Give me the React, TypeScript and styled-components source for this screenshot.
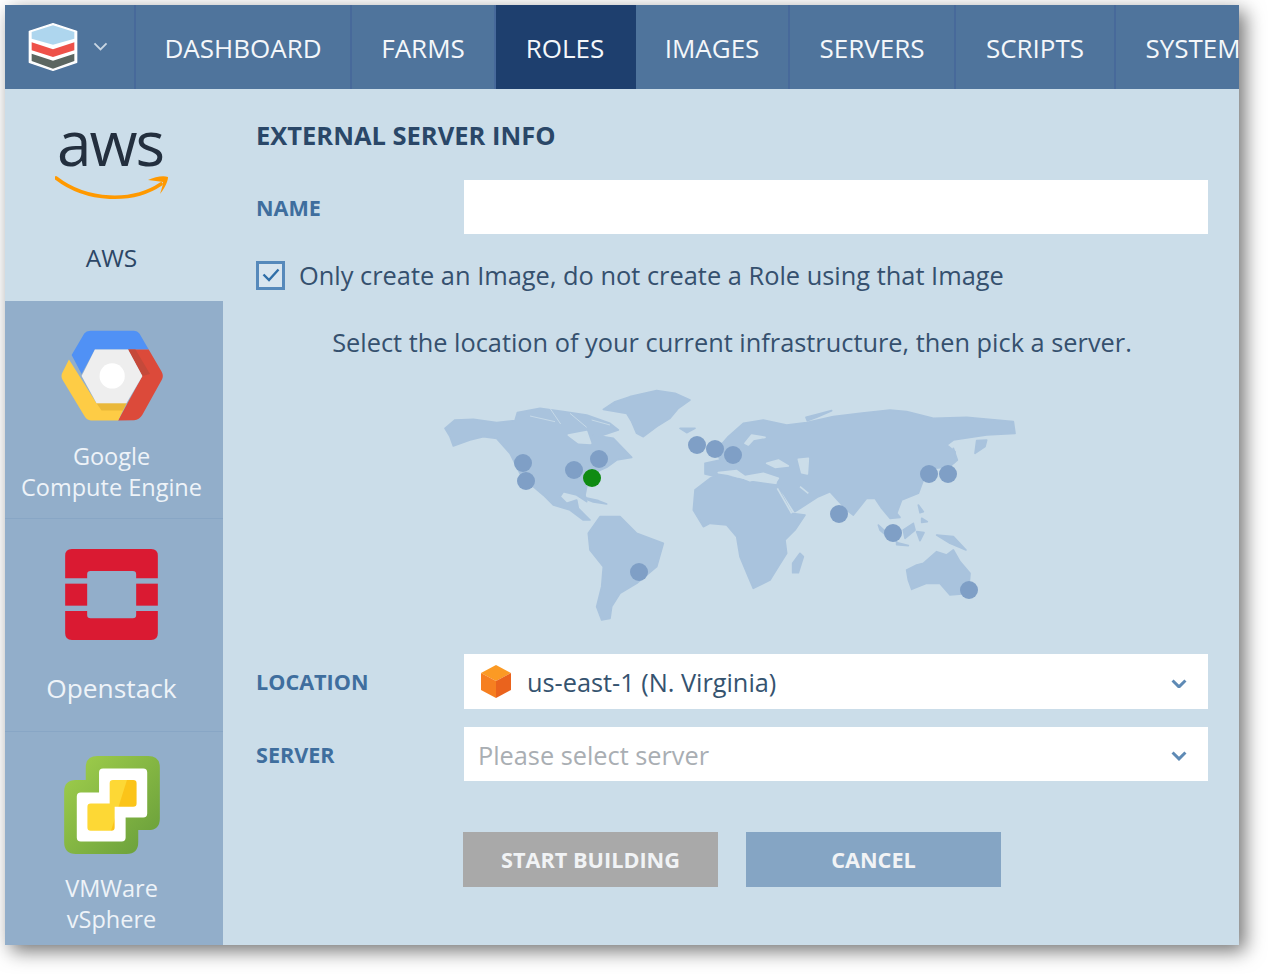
import React from 'react';
import styled, { createGlobalStyle } from 'styled-components';

const GlobalStyle = createGlobalStyle`
  html, body {
    margin: 0;
    background: #fff;
  }
  body {
    font-family: "Open Sans", "Liberation Sans", sans-serif;
  }
`;

const Page = styled.div`
  padding: 5px;
  width: 1268px;
  height: 974px;
  box-sizing: border-box;
  overflow: hidden;
`;

const Window = styled.div`
  width: 1234px;
  height: 940px;
  background: #cbdde9;
  box-shadow: 6px 6px 18px rgba(0, 0, 0, 0.55);
  display: flex;
  flex-direction: column;
`;

const Navbar = styled.nav`
  height: 84px;
  flex: none;
  display: flex;
  background: #4f749c;
  overflow: hidden;
`;

const LogoCell = styled.div`
  width: 131px;
  flex: none;
  display: flex;
  align-items: center;
  padding-left: 23px;
  gap: 15px;
  box-sizing: border-box;
  border-right: 2px solid #47699a;
`;

const NavItem = styled.a<{ $width: number; $active?: boolean }>`
  width: ${p => p.$width}px;
  flex: none;
  box-sizing: border-box;
  display: flex;
  align-items: center;
  justify-content: center;
  padding-top: 2px;
  color: #f4f7fa;
  font-size: 26px;
  font-weight: 500;
  white-space: nowrap;
  border-right: 2px solid ${p => (p.$active ? '#1e3f6e' : '#47699a')};
  background: ${p => (p.$active ? '#1e3f6e' : 'transparent')};
`;

const Body = styled.div`
  flex: 1;
  display: flex;
  min-height: 0;
`;

const Sidebar = styled.aside`
  width: 218px;
  flex: none;
  display: grid;
  grid-template-rows: 212px 218px 213px 1fr;
  background: #92aeca;
`;

const Platform = styled.div<{ $top: number; $active?: boolean; $last?: boolean }>`
  display: flex;
  flex-direction: column;
  align-items: center;
  padding: ${p => p.$top}px 5px 0 0;
  box-sizing: border-box;
  background: ${p => (p.$active ? '#cbdde9' : 'transparent')};
  border-bottom: ${p => (p.$active || p.$last ? 'none' : '1px solid #88a6c5')};
`;

const PlatformName = styled.div<{ $gap: number; $size?: number; $active?: boolean }>`
  margin-top: ${p => p.$gap}px;
  font-size: ${p => p.$size ?? 23.5}px;
  font-weight: 500;
  line-height: 31px;
  text-align: center;
  color: ${p => (p.$active ? '#2c4666' : '#eef3f8')};
  white-space: nowrap;
`;

const AwsMark = styled.div`
  display: flex;
  flex-direction: column;
  align-items: center;
  height: 86px;
`;

const AwsWord = styled.span`
  margin: -4px 3px 4px 0;
  font-size: 62px;
  font-weight: 500;
  line-height: 58px;
  letter-spacing: -2px;
  color: #232f3e;
`;

const Main = styled.main`
  flex: 1;
  padding: 29px 31px 0 33px;
  display: flex;
  flex-direction: column;
`;

const Title = styled.h2`
  margin: 0;
  font-size: 25.5px;
  line-height: 34px;
  font-weight: 700;
  color: #2a4768;
`;

const FormRow = styled.div<{ $top: number }>`
  display: flex;
  align-items: center;
  margin-top: ${p => p.$top}px;
`;

const FieldLabel = styled.label`
  width: 208px;
  flex: none;
  font-size: 21.6px;
  font-weight: 700;
  color: #3f6e9e;
`;

const TextInput = styled.div`
  flex: 1;
  height: 54px;
  background: #fff;
`;

const Select = styled.div<{ $height: number }>`
  flex: 1;
  height: ${p => p.$height}px;
  background: #fff;
  display: flex;
  align-items: center;
  padding: 0 21px 0 14px;
  box-sizing: border-box;
`;

const SelectValue = styled.span<{ $placeholder?: boolean }>`
  flex: 1;
  font-size: 25.3px;
  color: ${p => (p.$placeholder ? '#a9aeb3' : '#35536f')};
  margin-left: ${p => (p.$placeholder ? 0 : 16)}px;
  padding-top: ${p => (p.$placeholder ? 2 : 0)}px;
`;

const SelectArrow = styled.span`
  display: flex;
  margin-top: 4px;
`;

const CubeWrap = styled.span`
  display: flex;
  margin-left: 3px;
`;

const CheckRow = styled.div`
  display: flex;
  align-items: center;
  gap: 14px;
  margin-top: 24px;
`;

const CheckBox = styled.span`
  width: 29px;
  height: 29px;
  box-sizing: border-box;
  border: 3px solid #5689bb;
  background: #d8e5ef;
  display: flex;
  align-items: center;
  justify-content: center;
`;

const CheckLabel = styled.span`
  font-size: 25.4px;
  color: #35506e;
`;

const Hint = styled.p`
  margin: 33px 0 0;
  font-size: 25.35px;
  line-height: 34px;
  text-align: center;
  color: #35506e;
`;

const MapWrap = styled.div`
  margin: 21px 0 24px 174px;
  width: 600px;
  height: 250px;
`;

const Actions = styled.div`
  display: flex;
  gap: 28px;
  margin: 51px 0 0 207px;
`;

const Button = styled.button<{ $muted?: boolean }>`
  width: 255px;
  height: 55px;
  border: none;
  padding: 0;
  font-family: inherit;
  font-size: 21.7px;
  font-weight: 700;
  color: #f1f3f5;
  background: ${p => (p.$muted ? '#a9a9a9' : '#85a5c4')};
`;

const Chevron = ({ color, size = 16, weight = 3 }: { color: string; size?: number; weight?: number }) => (
  <svg width={size} height={size * 0.62} viewBox="0 0 16 10" fill="none">
    <path d="M1.5 1.5 L8 8 L14.5 1.5" stroke={color} strokeWidth={weight} />
  </svg>
);

const StackLogo = () => (
  <svg width="50" height="48" viewBox="0 0 150 144">
    <path d="M75 2 L146 25 V118 L75 142 L4 118 V25 Z" fill="#fff" stroke="#fff" strokeWidth="4" strokeLinejoin="round" />
    <path d="M75 7 L139 27 V47 L75 65 L11 47 V27 Z" fill="#aed6ee" />
    <path d="M11 58 L75 79 L139 58 V82 L75 102 L11 82 Z" fill="#ee5149" />
    <path d="M11 92 L75 113 L139 92 V114 L75 137 L11 114 Z" fill="#5b6661" />
  </svg>
);

const AwsSmile = () => (
  <svg width="114" height="26" viewBox="0 0 114 26" fill="none">
    <path d="M1 3 C32 27 78 28 106 9" stroke="#f90" strokeWidth="3.6" strokeLinecap="round" />
    <path d="M93 5 C100 2 108 0 113 2 C113 7 109 14 105 19 C107 13 108 9 108 7 C104 6 98 6 93 5 Z" fill="#f90" />
  </svg>
);

const GceLogo = () => (
  <svg width="102" height="91" viewBox="0 0 307 273">
    <path d="M32 75 L70 10 Q76 2 88 2 H220 Q230 2 236 10 L264 58 H102 L62 132 Z" fill="#5091f5" />
    <path d="M202 58 H264 L303 125 Q310 138 303 150 L245 255 Q235 271 220 271 L172 272 L245 138 Z" fill="#dc4a3a" />
    <path d="M202 58 H224 L268 132 L245 138 Z" fill="#c5493a" />
    <path d="M24 88 L107 220 H197 L172 272 H90 Q78 272 70 258 L5 150 Q-2 138 5 126 Z" fill="#fecc45" />
    <path d="M107 220 H197 L186 242 H122 Z" fill="#eab839" />
    <path d="M102 58 H202 L245 138 L197 220 H107 L62 138 Z" fill="#eeeeee" />
    <circle cx="154" cy="138" r="38" fill="#fff" />
  </svg>
);

const OpenstackLogo = () => (
  <svg width="93" height="91" viewBox="0 0 278 273" fill="#da1a32">
    <path d="M0 88 V20 Q0 0 20 0 H258 Q278 0 278 20 V88 H213 V76 Q213 66 203 66 H76 Q66 66 66 76 V88 Z" />
    <rect x="0" y="104" width="66" height="66" />
    <rect x="213" y="104" width="65" height="66" />
    <path d="M0 186 H66 V198 Q66 208 76 208 H203 Q213 208 213 198 V186 H278 V253 Q278 273 258 273 H20 Q0 273 0 253 Z" />
  </svg>
);

const VsphereLogo = () => (
  <svg width="96" height="98" viewBox="0 0 288 295">
    <defs>
      <linearGradient id="vs-green" x1="0" y1="0" x2="1" y2="1">
        <stop offset="0" stopColor="#a2d04c" />
        <stop offset="1" stopColor="#669c3a" />
      </linearGradient>
      <linearGradient id="vs-yellow" gradientUnits="userSpaceOnUse" x1="92" y1="131" x2="232" y2="175">
        <stop offset="0.5" stopColor="#fdd835" />
        <stop offset="0.52" stopColor="#fbc419" />
      </linearGradient>
    </defs>
    <path
      d="M65 72 V35 Q65 0 100 0 H253 Q288 0 288 35 V188 Q288 223 253 223 H223 V260 Q223 295 188 295 H35 Q0 295 0 260 V107 Q0 72 35 72 Z"
      fill="url(#vs-green)"
    />
    <path
      d="M105 110 V50 Q105 38 117 38 H238 Q250 38 250 50 V173 Q250 185 238 185 H185 V245 Q185 257 173 257 H50 Q38 257 38 245 V122 Q38 110 50 110 Z"
      fill="#fff"
    />
    <path
      d="M137 143 V82 Q137 72 147 72 H208 Q218 72 218 82 V143 Q218 153 208 153 H152 V215 Q152 225 142 225 H80 Q70 225 70 215 V153 Q70 143 80 143 Z"
      fill="url(#vs-yellow)"
    />
  </svg>
);

const CubeIcon = () => (
  <svg width="30" height="33" viewBox="0 0 30 33">
    <path d="M15 0 L30 8 L15 16 L0 8 Z" fill="#fb9a24" />
    <path d="M0 8 L15 16 V33 L0 25 Z" fill="#f67f20" />
    <path d="M30 8 L15 16 V33 L30 25 Z" fill="#ea631d" />
  </svg>
);

// land outlines traced at 3x, Americas in the first group, the rest shifted 870 across
const americas = [
  'M45 145 L75 120 L130 118 L200 128 L255 122 L262 98 L330 85 L400 95 L470 105 L540 130 L565 150 L520 165 L490 165 L550 175 L605 232 L560 240 L530 262 L490 280 L470 320 L465 345 L470 365 L440 345 L400 335 L390 350 L410 370 L440 360 L445 385 L465 405 L480 420 L460 420 L420 390 L370 375 L340 345 L310 320 L270 280 L240 220 L200 175 L160 170 L120 180 L70 198 L60 170 Z',
  'M475 460 L510 410 L570 410 L620 460 L700 490 L680 560 L620 610 L570 640 L545 680 L540 715 L515 720 L500 680 L515 620 L520 560 L480 510 Z',
  'M520 88 L555 65 L600 50 L680 32 L735 40 L780 60 L745 85 L720 115 L680 140 L640 170 L620 160 L605 125 L590 100 Z',
  'M450 350 L505 362 L530 372 L490 366 Z',
];

const arcticCracks = [
  'M300 108 L375 125',
  'M360 85 L392 132',
  'M420 100 L470 142',
  'M485 120 L540 135',
];

const oldWorld = [
  'M25 170 L70 130 L130 120 L200 135 L260 128 L340 110 L420 100 L510 90 L560 95 L640 115 L740 112 L880 125 L885 160 L800 165 L700 180 L680 195 L705 215 L705 245 L690 260 L640 265 L610 300 L595 340 L545 360 L530 400 L540 412 L510 415 L485 385 L465 355 L440 355 L400 405 L380 390 L330 335 L295 350 L225 395 L190 340 L170 320 L175 300 L130 285 L90 300 L50 280 L-10 290 L-45 282 L-45 250 L0 240 L-10 210 Z',
  'M0 282 L50 295 L95 305 L170 315 L215 400 L255 405 L225 450 L195 480 L200 520 L175 560 L150 600 L100 625 L85 590 L60 530 L50 470 L20 435 L-30 430 L-50 440 L-80 390 L-75 330 L-30 295 Z',
  'M240 520 L250 530 L235 578 L218 578 L218 550 Z',
  'M560 570 L590 555 L610 550 L650 515 L680 525 L700 510 L720 545 L750 580 L745 640 L690 645 L660 610 L620 610 L575 628 L565 600 Z',
  'M550 450 L580 430 L585 450 L555 475 Z',
  'M475 435 L530 485 L515 480 L480 450 Z',
  'M530 488 L565 497 L530 494 Z',
  'M650 465 L700 470 L738 510 L690 490 Z',
  'M595 375 L610 395 L600 398 Z',
  'M605 415 L622 425 L605 427 Z',
  'M590 455 L612 458 L600 482 Z',
  'M765 220 L770 182 L800 180 L795 200 Z',
  'M700 205 L712 240 L700 250 Z',
  'M258 112 L335 92 L290 112 L262 122 Z',
  'M-120 145 L-75 145 L-100 158 Z',
];

const seas = [
  'M140 250 L175 240 L205 258 L165 262 Z',
  'M235 238 L265 235 L262 282 L245 278 Z',
  'M95 165 L135 172 L100 178 L85 195 L75 190 Z',
  'M-5 278 L50 272 L75 290 L130 280 L175 295 L170 302 L130 290 L90 302 L50 286 Z',
  'M172 325 L215 400',
  'M240 320 L265 340',
];

const hudson = 'M415 165 L470 155 L482 190 L445 188 Z';

const pins = [
  [523, 463], [526, 481], [574, 470], [599, 459], [639, 572], [697, 445], [715, 449],
  [733, 455], [839, 514], [893, 533], [929, 474], [948, 474], [969, 590],
];

const WorldMap = () => (
  <svg width="600" height="250" viewBox="0 0 1800 750">
    <g fill="#a9c3dd" stroke="#a9c3dd" strokeWidth="5" strokeLinejoin="round">
      {americas.map((d, i) => <path key={i} d={d} />)}
      <g transform="translate(870 0)">
        {oldWorld.map((d, i) => <path key={i} d={d} />)}
      </g>
    </g>
    <g fill="#cbdde9" stroke="#cbdde9" strokeWidth="5" strokeLinejoin="round">
      <path d={hudson} />
      {arcticCracks.map((d, i) => <path key={i} d={d} strokeWidth="2.5" />)}
      <g transform="translate(870 0)">
        {seas.map((d, i) => <path key={i} d={d} />)}
      </g>
    </g>
    {pins.map(([x, y]) => (
      <circle key={`${x}-${y}`} cx={(x - 430) * 3} cy={(y - 380) * 3} r="27" fill="#7f9fc6" />
    ))}
    <circle cx={(592 - 430) * 3} cy={(478 - 380) * 3} r="27" fill="#0f8b12" />
  </svg>
);

const navItems = [
  { label: 'DASHBOARD', width: 216 },
  { label: 'FARMS', width: 144 },
  { label: 'ROLES', width: 140, active: true },
  { label: 'IMAGES', width: 154 },
  { label: 'SERVERS', width: 166 },
  { label: 'SCRIPTS', width: 160 },
  { label: 'SYSTEM', width: 156 },
];

const App: React.FC = () => (
  <Page>
    <GlobalStyle />
    <Window>
      <Navbar>
        <LogoCell>
          <StackLogo />
          <Chevron color="#c9d6e3" size={15} weight={2} />
        </LogoCell>
        {navItems.map(item => (
          <NavItem key={item.label} $width={item.width} $active={item.active}>
            {item.label}
          </NavItem>
        ))}
      </Navbar>
      <Body>
        <Sidebar>
          <Platform $top={28} $active>
            <AwsMark>
              <AwsWord>aws</AwsWord>
              <AwsSmile />
            </AwsMark>
            <PlatformName $gap={39} $size={24.5} $active>AWS</PlatformName>
          </Platform>
          <Platform $top={29}>
            <GceLogo />
            <PlatformName $gap={20}>Google<br />Compute Engine</PlatformName>
          </Platform>
          <Platform $top={30}>
            <OpenstackLogo />
            <PlatformName $gap={33} $size={26.3}>Openstack</PlatformName>
          </Platform>
          <Platform $top={24} $last>
            <VsphereLogo />
            <PlatformName $gap={19}>VMWare<br />vSphere</PlatformName>
          </Platform>
        </Sidebar>
        <Main>
          <Title>EXTERNAL SERVER INFO</Title>
          <FormRow $top={28}>
            <FieldLabel>NAME</FieldLabel>
            <TextInput />
          </FormRow>
          <CheckRow>
            <CheckBox>
              <svg width="18" height="14" viewBox="0 0 18 14" fill="none">
                <path d="M1.5 6.5 L7 12 L16.5 1.5" stroke="#2f6ea8" strokeWidth="2.4" />
              </svg>
            </CheckBox>
            <CheckLabel>Only create an Image, do not create a Role using that Image</CheckLabel>
          </CheckRow>
          <Hint>Select the location of your current infrastructure, then pick a server.</Hint>
          <MapWrap>
            <WorldMap />
          </MapWrap>
          <FormRow $top={0}>
            <FieldLabel>LOCATION</FieldLabel>
            <Select $height={55}>
              <CubeWrap><CubeIcon /></CubeWrap>
              <SelectValue>us-east-1 (N. Virginia)</SelectValue>
              <SelectArrow><Chevron color="#5e8ab5" /></SelectArrow>
            </Select>
          </FormRow>
          <FormRow $top={18}>
            <FieldLabel>SERVER</FieldLabel>
            <Select $height={54}>
              <SelectValue $placeholder>Please select server</SelectValue>
              <SelectArrow><Chevron color="#5e8ab5" /></SelectArrow>
            </Select>
          </FormRow>
          <Actions>
            <Button $muted>START BUILDING</Button>
            <Button>CANCEL</Button>
          </Actions>
        </Main>
      </Body>
    </Window>
  </Page>
);

export default App;
